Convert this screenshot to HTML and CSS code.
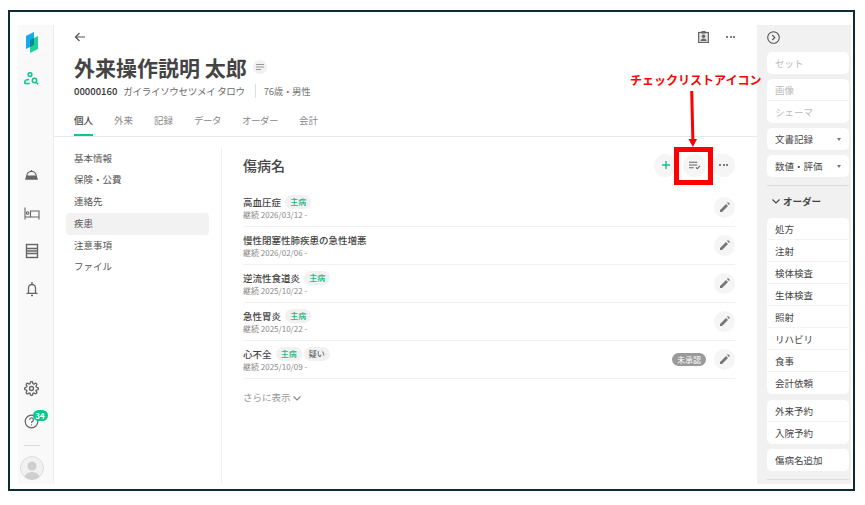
FILE: index.html
```html
<!DOCTYPE html>
<html lang="ja">
<head>
    <meta charset="UTF-8">
    <title>傷病名</title>
    <link rel="stylesheet" href="styles.css">
</head>
<body>
<div class="frame">
    <div class="app">
        <div class="rail">
            <div class="slot">
                <svg width="24" height="24" viewBox="0 0 24 24">
                    <polygon points="6,6 14,2 14,15 6,19" fill="#12a8f2"/>
                    <polygon points="10,10 18,6 18,19 10,23" fill="#1fd09b"/>
                    <polygon points="10,10 14,8 14,15 10,17" fill="#0a8a8c"/>
                </svg>
            </div>
            <div class="slot slot-person">
                <svg width="15" height="13" viewBox="0 0 15 13" fill="none" stroke="#10c48f" stroke-width="1.500">
                    <circle cx="6" cy="2.600" r="1.900"/>
                    <path d="M.8 11.800V10.200c0-1.400 1.700-2.600 4.200-2.700"/>
                    <path d="M.8 11.500h5"/>
                    <circle cx="10.500" cy="8.500" r="2.200"/>
                    <path d="M12.100 10.200l2.200 2.200"/>
                </svg>
            </div>
            <div class="rail-nav">
                <div class="slot-tall">
                    <svg width="15" height="11" viewBox="0 0 15 11">
                        <path d="M2.800 6a4.700 4.700 0 0 1 9.400 0z" fill="none" stroke="#666" stroke-width="1.200"/>
                        <path d="M2.200 6h10.600l1.200 3.800H1z" fill="#666"/>
                        <rect x="6.800" y="0" width="1.400" height="1.500" fill="#666"/>
                    </svg>
                </div>
                <div class="slot-tall">
                    <svg width="16" height="13" viewBox="0 0 16 13" fill="none" stroke="#666" stroke-width="1.100">
                        <path d="M1 .5v12M1 10h14M15 12.500V4H6.500v6"/>
                        <circle cx="3.600" cy="6" r="1.300"/>
                    </svg>
                </div>
                <div class="slot-tall">
                    <svg width="14" height="16" viewBox="0 0 14 16" fill="none" stroke="#666" stroke-width="1.400">
                        <rect x="1.500" y="1.500" width="11" height="13"/>
                        <path d="M1.500 5.500h11M1.500 8h11M1.500 10.500h11"/>
                    </svg>
                </div>
                <div class="slot-tall">
                    <svg width="14" height="16" viewBox="0 0 14 16" fill="none" stroke="#666" stroke-width="1.300">
                        <path d="M3.500 12V7a3.500 3.500 0 0 1 7 0v5M1.500 12.300h11"/>
                        <path d="M7 1v2M6 14.500h2"/>
                    </svg>
                </div>
            </div>
            <div class="rail-bottom">
                <div class="slot">
                    <svg width="15" height="15" viewBox="0 0 24 24" fill="none" stroke="#666" stroke-width="2.200">
                        <circle cx="12" cy="12" r="3.200"/>
                        <path d="M19.400 15a1.700 1.700 0 0 0 .3 1.800l.1.100a2 2 0 1 1-2.900 2.900l-.1-.1a1.700 1.700 0 0 0-2.800 1.200V21a2 2 0 1 1-4 0v-.1a1.700 1.700 0 0 0-2.900-1.100l-.1.100a2 2 0 1 1-2.900-2.900l.1-.1a1.700 1.700 0 0 0-1.200-2.800H3a2 2 0 1 1 0-4h.1a1.700 1.700 0 0 0 1.100-2.900l-.1-.1a2 2 0 1 1 2.900-2.900l.1.100a1.700 1.700 0 0 0 1.800.3h.1a1.700 1.700 0 0 0 1-1.500V3a2 2 0 1 1 4 0v.1a1.700 1.700 0 0 0 2.900 1.200l.1-.1a2 2 0 1 1 2.900 2.900l-.1.100a1.700 1.700 0 0 0-.3 1.800v.1a1.700 1.700 0 0 0 1.500 1H21a2 2 0 1 1 0 4h-.1a1.700 1.700 0 0 0-1.500 1z"/>
                    </svg>
                </div>
                <div class="slot slot-help">
                    <svg width="15" height="15" viewBox="0 0 15 15" fill="none" stroke="#666" stroke-width="1.200">
                        <circle cx="7.500" cy="7.500" r="6.300"/>
                        <path d="M5.600 5.800a1.900 1.900 0 1 1 2.700 1.800c-.6.300-.8.700-.8 1.400M7.500 10.400v1"/>
                    </svg>
                    <span class="badge">34</span>
                </div>
                <div class="rail-line"></div>
                <div class="avatar">
                    <svg width="24" height="24" viewBox="0 0 24 24">
                        <circle cx="12" cy="12" r="11.500" fill="#f1f1f1" stroke="#ddd"/>
                        <circle cx="12" cy="10" r="4.600" fill="#cfcfcf"/>
                        <path d="M4.500 21c1-3.500 4-4.800 7.500-4.800s6.500 1.300 7.500 4.800a11.500 11.500 0 0 1-15 0z" fill="#cfcfcf"/>
                    </svg>
                </div>
            </div>
        </div>

        <div class="main">
            <div class="head">
                <div class="head-top">
                    <svg width="12" height="12" viewBox="0 0 12 12" fill="none" stroke="#555" stroke-width="1.200">
                        <path d="M11 6H1.500M5.500 2L1.500 6l4 4"/>
                    </svg>
                    <div class="head-icons">
                        <svg width="11" height="12" viewBox="0 0 11 12">
                            <rect x=".6" y="1.500" width="9.800" height="10" fill="#e4e4e4" stroke="#666" stroke-width="1.200"/>
                            <rect x="3.500" y="0" width="4" height="2.500" fill="#666"/>
                            <circle cx="5.500" cy="5.200" r="1.700" fill="#666"/>
                            <path d="M2.500 10c0-1.800 1.400-2.600 3-2.600s3 .8 3 2.600z" fill="#666"/>
                        </svg>
                        <span class="dots"><i></i><i></i><i></i></span>
                    </div>
                </div>
                <div class="name-row">
                    <h1 class="name">外来操作説明 太郎</h1>
                    <span class="memo">
                        <svg width="8" height="6" viewBox="0 0 8 6" stroke="#999" stroke-width="1">
                            <path d="M0 .5h8M0 3h8M0 5.500h5"/>
                        </svg>
                    </span>
                </div>
                <div class="info">
                    <b>00000160</b>
                    <span class="kana">ガイライソウセツメイ タロウ</span>
                    <span class="age">76歳・男性</span>
                </div>
                <div class="tabs">
                    <span class="tab tab-on">個人</span>
                    <span class="tab">外来</span>
                    <span class="tab">記録</span>
                    <span class="tab tab-long">データ</span>
                    <span class="tab tab-long">オーダー</span>
                    <span class="tab">会計</span>
                </div>
            </div>

            <div class="body">
                <ul class="side">
                    <li>基本情報</li>
                    <li>保険・公費</li>
                    <li>連絡先</li>
                    <li class="side-on">疾患</li>
                    <li>注意事項</li>
                    <li>ファイル</li>
                </ul>
                <div class="content">
                    <div class="content-head">
                        <h2>傷病名</h2>
                        <div class="tools">
                            <span class="round">
                                <svg width="8" height="8" viewBox="0 0 8 8" stroke="#10c48f" stroke-width="1.400"><path d="M4 0v8M0 4h8"/></svg>
                            </span>
                            <span class="round">
                                <svg width="12" height="9" viewBox="0 0 13 9" fill="none" stroke="#666" stroke-width="1.100">
                                    <path d="M0 1h9M0 4h9M0 7h5M7.500 6.500l1.500 1.500 3-3"/>
                                </svg>
                            </span>
                            <span class="round"><span class="dots"><i></i><i></i><i></i></span></span>
                        </div>
                    </div>

                    <div class="row">
                        <div class="row-text">
                            <div class="row-title">高血圧症 <span class="chip">主病</span></div>
                            <div class="row-date">継続 2026/03/12 -</div>
                        </div>
                        <span class="edit"><svg width="10" height="10" viewBox="0 0 10 10" fill="#777"><path d="M0 10V8l6-6 2 2-6 6zM7 1l1-1 2 2-1 1z"/></svg></span>
                    </div>
                    <div class="row">
                        <div class="row-text">
                            <div class="row-title">慢性閉塞性肺疾患の急性増悪</div>
                            <div class="row-date">継続 2026/02/06 -</div>
                        </div>
                        <span class="edit"><svg width="10" height="10" viewBox="0 0 10 10" fill="#777"><path d="M0 10V8l6-6 2 2-6 6zM7 1l1-1 2 2-1 1z"/></svg></span>
                    </div>
                    <div class="row">
                        <div class="row-text">
                            <div class="row-title">逆流性食道炎 <span class="chip">主病</span></div>
                            <div class="row-date">継続 2025/10/22 -</div>
                        </div>
                        <span class="edit"><svg width="10" height="10" viewBox="0 0 10 10" fill="#777"><path d="M0 10V8l6-6 2 2-6 6zM7 1l1-1 2 2-1 1z"/></svg></span>
                    </div>
                    <div class="row">
                        <div class="row-text">
                            <div class="row-title">急性胃炎 <span class="chip">主病</span></div>
                            <div class="row-date">継続 2025/10/22 -</div>
                        </div>
                        <span class="edit"><svg width="10" height="10" viewBox="0 0 10 10" fill="#777"><path d="M0 10V8l6-6 2 2-6 6zM7 1l1-1 2 2-1 1z"/></svg></span>
                    </div>
                    <div class="row">
                        <div class="row-text">
                            <div class="row-title">心不全 <span class="chip">主病</span><span class="chip chip-gray">疑い</span></div>
                            <div class="row-date">継続 2025/10/09 -</div>
                        </div>
                        <span class="pending">未承認</span>
                        <span class="edit"><svg width="10" height="10" viewBox="0 0 10 10" fill="#777"><path d="M0 10V8l6-6 2 2-6 6zM7 1l1-1 2 2-1 1z"/></svg></span>
                    </div>

                    <div class="more">さらに表示
                        <svg width="8" height="5" viewBox="0 0 8 5" fill="none" stroke="#888" stroke-width="1.100"><path d="M.5.500L4 4l3.500-3.500"/></svg>
                    </div>
                </div>
            </div>
        </div>

        <div class="panel">
            <div class="panel-top">
                <svg width="13" height="13" viewBox="0 0 13 13" fill="none" stroke="#555" stroke-width="1.100">
                    <circle cx="6.500" cy="6.500" r="5.800"/>
                    <path d="M5.300 4l2.500 2.500L5.300 9"/>
                </svg>
            </div>
            <div class="card">
                <div class="item off">セット</div>
            </div>
            <div class="card">
                <div class="item off">画像</div>
                <div class="item off">シェーマ</div>
            </div>
            <div class="card">
                <div class="item">文書記録<i class="caret"></i></div>
            </div>
            <div class="card">
                <div class="item">数値・評価<i class="caret"></i></div>
            </div>
            <div class="panel-line"></div>
            <div class="order-label">
                <svg width="8" height="5" viewBox="0 0 8 5" fill="none" stroke="#444" stroke-width="1.100"><path d="M.5.500L4 4l3.500-3.500"/></svg>
                オーダー
            </div>
            <div class="card card-orders">
                <div class="item">処方</div>
                <div class="item">注射</div>
                <div class="item">検体検査</div>
                <div class="item">生体検査</div>
                <div class="item">照射</div>
                <div class="item">リハビリ</div>
                <div class="item">食事</div>
                <div class="item">会計依頼</div>
            </div>
            <div class="card">
                <div class="item">外来予約</div>
                <div class="item">入院予約</div>
            </div>
            <div class="card">
                <div class="item">傷病名追加</div>
            </div>
            <div class="panel-line panel-line-end"></div>
        </div>
    </div>
</div>

<!-- 注釈 -->
<span class="note">チェックリストアイコン</span>
<svg class="note-arrow" width="10" height="56" viewBox="0 0 10 56" fill="#f00">
    <polygon points="2.200,0 5.200,0 6.400,50 3.400,50"/>
    <polygon points="0.500,48 9,48 4.900,56"/>
</svg>
<div class="note-box"></div>
</body>
</html>
```

FILE: styles.css
```css
* {
    padding: 0;
    margin: 0;
    box-sizing: border-box;
}

body {
    padding: 10px 0 0 8px;
    background: #fff;
    font-family: "Noto Sans CJK JP", "Noto Sans", sans-serif;
    color: #444;
    font-size: 9.5px;
}

ul {
    list-style: none;
}

.frame {
    width: 847px;
    height: 481px;
    border: 2px solid #0d2a36;
    padding: 13px 2px 5px 8px;
}

.app {
    display: flex;
    height: 100%;
}

/* 左のレール */
.rail {
    width: 36px;
    flex: none;
    display: flex;
    flex-direction: column;
    align-items: center;
    padding: 5px 8px 4px 0;
    background: #f9f9f9;
    border-right: 1px solid #eee;
}

.slot {
    width: 24px;
    height: 24px;
    flex: none;
    display: flex;
    align-items: center;
    justify-content: center;
}

.slot-person {
    margin-top: 12px;
}

.rail-nav {
    margin-top: 67px;
}

.slot-tall {
    width: 24px;
    height: 37.7px;
    display: flex;
    align-items: center;
    justify-content: center;
}

.rail-bottom {
    margin-top: auto;
    display: flex;
    flex-direction: column;
    align-items: center;
}

.slot-help {
    position: relative;
    margin-top: 9px;
}

.badge {
    position: absolute;
    left: 13px;
    top: 1px;
    width: 15px;
    height: 11px;
    border-radius: 6px;
    background: #08c78f;
    color: #fff;
    font-size: 8px;
    font-weight: 700;
    line-height: 11px;
    text-align: center;
}

.rail-line {
    width: 16px;
    height: 1px;
    background: #ddd;
    margin: 12px 0 10px;
}

.avatar {
    width: 24px;
    height: 24px;
}

.avatar svg {
    display: block;
}

/* 中央 */
.main {
    flex: 1;
    min-width: 0;
    display: flex;
    flex-direction: column;
}

.head {
    border-bottom: 1px solid #e8e8e8;
    padding-left: 20px;
}

.head-top {
    height: 24px;
    display: flex;
    align-items: center;
    justify-content: space-between;
    padding-right: 22px;
}

.head-icons {
    display: flex;
    align-items: center;
    gap: 17px;
}

.dots {
    display: flex;
    gap: 1.5px;
}

.dots i {
    width: 2px;
    height: 2px;
    border-radius: 50%;
    background: #555;
}

.name-row {
    display: flex;
    align-items: center;
    margin-top: 3px;
    height: 30px;
}

.name {
    font-size: 21px;
    font-weight: 700;
    line-height: 30px;
    color: #444;
}

.memo {
    width: 14px;
    height: 14px;
    margin-left: 6px;
    border-radius: 50%;
    background: #f1f1f1;
    display: flex;
    align-items: center;
    justify-content: center;
}

.info {
    display: flex;
    align-items: center;
    margin-top: 2px;
    height: 14px;
    font-size: 9.5px;
    line-height: 14px;
}

.info b {
    font-weight: 500;
    color: #333;
}

.kana {
    margin-left: 6px;
    color: #666;
    letter-spacing: -.3px;
}

.age {
    margin-left: 10px;
    padding-left: 8px;
    border-left: 1px solid #ddd;
    color: #777;
    letter-spacing: -.3px;
}

.tabs {
    display: flex;
    gap: 21px;
    margin-top: 7px;
}

.tab {
    height: 31px;
    line-height: 30px;
    border-bottom: 2px solid transparent;
    color: #888;
    font-size: 9.5px;
}

.tab-long {
    letter-spacing: -.5px;
}

.tab-on {
    border-bottom-color: #08c78f;
    color: #444;
    font-weight: 500;
}

.body {
    flex: 1;
    display: flex;
    min-height: 0;
}

.side {
    width: 168px;
    flex: none;
    margin-top: 10px;
    padding: .5px 12px 0;
    border-right: 1px solid #f0f0f0;
}

.side li {
    height: 21.8px;
    line-height: 21.8px;
    padding-left: 8px;
    border-radius: 4px;
    color: #555;
}

.side-on {
    background: #f2f2f2;
}

.content {
    flex: 1;
    padding: 16px 22px 0 21px;
}

.content-head {
    display: flex;
    align-items: center;
    justify-content: space-between;
    height: 24px;
    margin-bottom: 12px;
}

h2 {
    font-size: 14px;
    font-weight: 500;
    color: #444;
}

.tools {
    display: flex;
    gap: 6px;
}

.round {
    width: 23px;
    height: 23px;
    border-radius: 50%;
    background: #f5f5f5;
    display: flex;
    align-items: center;
    justify-content: center;
}

.row {
    height: 38px;
    display: flex;
    align-items: center;
    gap: 8px;
    border-bottom: 1px solid #f1f1f1;
}

.row-text {
    flex: 1;
}

.row-title {
    height: 14px;
    line-height: 14px;
    font-weight: 500;
    color: #444;
    display: flex;
    align-items: center;
    white-space: pre;
}

.chip {
    height: 14px;
    line-height: 14px;
    margin-left: 2px;
    padding: 0 5px;
    border-radius: 7px;
    background: #f1f1f1;
    color: #1fb885;
    font-size: 8px;
}

.chip-gray {
    color: #666;
}

.row-date {
    height: 12px;
    line-height: 12px;
    font-size: 8px;
    color: #888;
}

.pending {
    height: 13px;
    line-height: 13px;
    padding: 0 5px;
    border-radius: 7px;
    background: #9a9a9a;
    color: #fff;
    font-size: 8px;
}

.edit {
    width: 21px;
    height: 21px;
    margin-top: -1px;
    border-radius: 50%;
    background: #f5f5f5;
    display: flex;
    align-items: center;
    justify-content: center;
}

.more {
    margin-top: 11px;
    height: 14px;
    line-height: 14px;
    color: #999;
}

/* 右のパネル */
.panel {
    width: 94px;
    flex: none;
    padding: 0 2px 0 10px;
    background: #f1f1f1;
    display: flex;
    flex-direction: column;
    gap: 5px;
}

.panel-top {
    height: 24px;
    margin-bottom: -2px;
    display: flex;
    align-items: center;
}

.card {
    background: #fff;
    border-radius: 5px;
}

.card-orders {
    margin-bottom: 1px;
}

.item {
    position: relative;
    height: 22px;
    line-height: 22px;
    padding-left: 8px;
    color: #444;
    border-bottom: 1px solid #f3f3f3;
}

.item:last-child {
    border-bottom: 0;
}

.off {
    color: #bbb;
}

.caret {
    position: absolute;
    right: 8px;
    top: 10px;
    border-style: solid;
    border-width: 3px 2.5px 0;
    border-color: #777 transparent transparent;
}

.panel-line {
    height: 1px;
    background: #ddd;
    margin-top: 3px;
}

.panel-line-end {
    margin-top: 3px;
}

.order-label {
    display: flex;
    align-items: center;
    gap: 3px;
    height: 16px;
    margin-top: 2px;
    margin-bottom: 4px;
    padding-left: 5px;
    font-weight: 700;
    color: #444;
}

/* 注釈 */
.note {
    position: absolute;
    left: 630px;
    top: 71px;
    font-size: 12px;
    line-height: 18px;
    font-weight: 700;
    color: #f00;
    white-space: nowrap;
}

.note-arrow {
    position: absolute;
    left: 688px;
    top: 91px;
}

.note-box {
    position: absolute;
    left: 674px;
    top: 147px;
    width: 39px;
    height: 38px;
    border: 5px solid #f00;
}
```
